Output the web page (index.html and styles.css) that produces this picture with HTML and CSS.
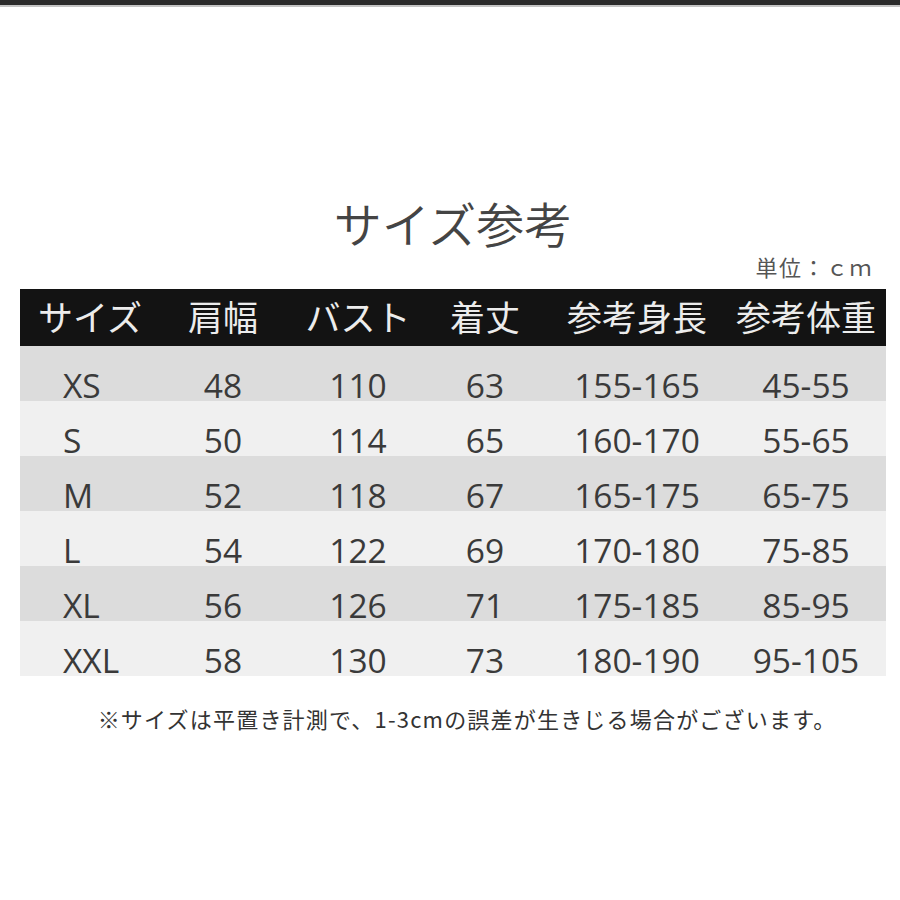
FILE: index.html
```html
<!DOCTYPE html>
<html lang="ja">
<head>
<meta charset="utf-8">
<title>サイズ参考</title>
<link rel="stylesheet" href="styles.css">
</head>
<body>
<div class="topbar"></div>
<div class="topline"></div>
<main class="page">
  <h1 class="title">サイズ参考</h1>
  <div class="unit">単位：ｃｍ</div>
  <div class="table">
    <div class="row head">
      <div class="cell c1">サイズ</div>
      <div class="cell">肩幅</div>
      <div class="cell">バスト</div>
      <div class="cell">着丈</div>
      <div class="cell">参考身長</div>
      <div class="cell">参考体重</div>
    </div>
    <div class="row dark">
      <div class="cell c1">XS</div><div class="cell">48</div><div class="cell">110</div><div class="cell">63</div><div class="cell">155-165</div><div class="cell">45-55</div>
    </div>
    <div class="row light">
      <div class="cell c1">S</div><div class="cell">50</div><div class="cell">114</div><div class="cell">65</div><div class="cell">160-170</div><div class="cell">55-65</div>
    </div>
    <div class="row dark">
      <div class="cell c1">M</div><div class="cell">52</div><div class="cell">118</div><div class="cell">67</div><div class="cell">165-175</div><div class="cell">65-75</div>
    </div>
    <div class="row light">
      <div class="cell c1">L</div><div class="cell">54</div><div class="cell">122</div><div class="cell">69</div><div class="cell">170-180</div><div class="cell">75-85</div>
    </div>
    <div class="row dark">
      <div class="cell c1">XL</div><div class="cell">56</div><div class="cell">126</div><div class="cell">71</div><div class="cell">175-185</div><div class="cell">85-95</div>
    </div>
    <div class="row light">
      <div class="cell c1">XXL</div><div class="cell">58</div><div class="cell">130</div><div class="cell">73</div><div class="cell">180-190</div><div class="cell">95-105</div>
    </div>
  </div>
  <p class="note">※サイズは平置き計測で、1-3cmの誤差が生きじる場合がございます。</p>
</main>
</body>
</html>
```

FILE: styles.css
```css
html, body {
  margin: 0;
  padding: 0;
  background: #ffffff;
}
body {
  width: 900px;
  height: 900px;
  overflow: hidden;
  font-family: "Noto Sans CJK JP", "Noto Sans", sans-serif;
}
.topbar {
  height: 5px;
  background: #2b2b2b;
}
.topline {
  height: 2px;
  background: #c4c4c4;
}
.page {
  padding: 0 14px 0 20px;
}
.title {
  margin: 187px 0 0 0;
  text-align: center;
  font-size: 48px;
  line-height: 56px;
  font-weight: 350;
  color: #444;
}
.unit {
  margin: 3px 0 10px 0;
  text-align: right;
  font-size: 22px;
  line-height: 26px;
  color: #555;
  letter-spacing: 1.5px;
  padding-right: 13px;
}
.table {
  width: 866px;
}
.row {
  display: grid;
  grid-template-columns: 140px 126px 144px 110px 194px 144px;
  padding-right: 8px;
  align-items: center;
}
.cell {
  text-align: center;
  white-space: nowrap;
}
.head {
  height: 57px;
  background: #131313;
  color: #ececec;
  font-size: 35px;
  font-weight: 400;
  line-height: 57px;
}
.head .cell {
  margin-top: -5px;
}
.dark, .light {
  height: 55px;
  font-family: "Open Sans", "Noto Sans", sans-serif;
  font-size: 33.5px;
  color: #3a3a3a;
  line-height: 55px;
}
.dark .cell, .light .cell {
  margin-top: 12px;
}
.dark {
  background: #dcdcdc;
}
.light {
  background: #f0f0f0;
}
.dark .c1, .light .c1 {
  text-align: left;
  padding-left: 43px;
}
.note {
  margin: 28px 0 0 0;
  width: 866px;
  text-align: center;
  font-size: 22px;
  line-height: 28px;
  font-weight: 400;
  color: #333;
  letter-spacing: 1.2px;
  text-indent: 28px;
}
```
